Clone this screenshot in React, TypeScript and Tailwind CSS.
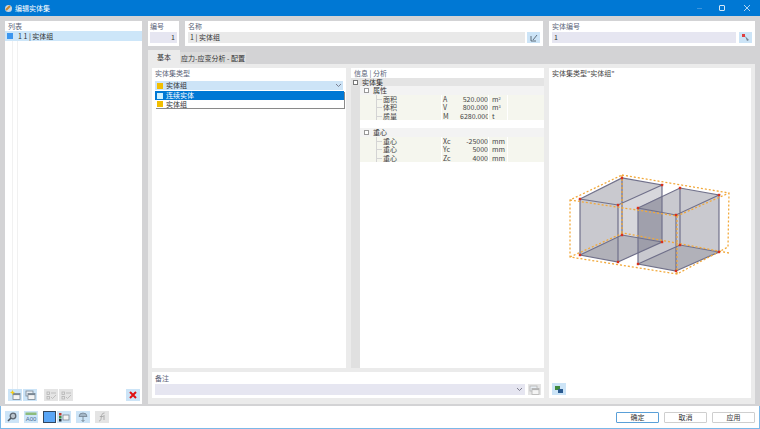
import React from 'react';

const font = { fontFamily: '"Noto Sans CJK SC", "Liberation Sans", sans-serif' };

const IconBtn = ({ children, off }: { children?: React.ReactNode; off?: boolean }) => (
  <div className={`w-[14px] h-[12px] flex items-center justify-center shrink-0 ${off ? 'bg-[#e4e4e4]' : 'bg-[#cce4f7]'}`}>{children}</div>
);

const Win = ({ c = '#7a8794', star, dbl }: { c?: string; star?: boolean; dbl?: boolean }) => (
  <svg width="11" height="10" viewBox="0 0 11 10">
    {dbl && <rect x="1" y="1" width="7" height="5" fill="#e8eef4" stroke={c} strokeWidth="0.8" />}
    <rect x="3" y="3.5" width="7" height="6" fill="#f4f4f4" stroke={c} strokeWidth="0.8" />
    <rect x="3" y="3.5" width="7" height="1.6" fill={c} />
    {star && <path d="M2.5 0L3.3 1.7L5 2.5L3.3 3.3L2.5 5L1.7 3.3L0 2.5L1.7 1.7Z" fill="#f5cf1c" />}
  </svg>
);

const CheckList = () => (
  <svg width="11" height="9" viewBox="0 0 11 9" fill="none" stroke="#b4b4b4" strokeWidth="0.8">
    <rect x="1" y="1" width="2.500" height="2.500" />
    <rect x="1" y="5.500" width="2.500" height="2.500" />
    <path d="M5 6L6.500 7.500L10 4M5 2H10" />
  </svg>
);

const Row = ({ label, sym, val, unit, sup }: { label: string; sym: string; val: string; unit: string; sup?: string }) => (
  <div className="flex h-[8.5px] bg-[#f5f6ee] text-[#444] leading-[8.5px]">
    <div className="w-[81px] relative pl-[23px] shrink-0">
      <span className="absolute left-[16px] top-0 bottom-0 border-l border-[#d4d4d4]" />
      <span className="absolute left-[16px] top-1/2 w-[6px] border-t border-[#d4d4d4]" />
      {label}
    </div>
    <div className="w-[19px] border-l border-white pl-[1px] shrink-0">{sym}</div>
    <div className="w-[28px] text-right shrink-0">{val}</div>
    <div className="w-[19px] pl-[3px] border-l border-white shrink-0">
      {unit}
      {sup && <sup className="text-[4px] leading-none">{sup}</sup>}
    </div>
    <div className="flex-1 border-l border-white" />
  </div>
);

const GroupRow = ({ label }: { label: string }) => (
  <div className="h-[8.5px] bg-[#f3f3f3] flex items-center leading-[8.5px] pl-[4px]">
    <span className="w-[5px] h-[5px] border border-[#999] mr-[4px] bg-white shrink-0" />
    {label}
  </div>
);

const Solid = () => {
  const edge = '#70708a';
  const fill = '#9c9ca8';
  const P = (d: string, o = 0.55) => <path d={d} fill={fill} fillOpacity={o} stroke="none" />;
  const L = (d: string) => <path d={d} fill="none" stroke={edge} strokeWidth="1.2" />;
  const reds: [number, number][] = [
    [580, 199], [618, 205], [622, 178], [662, 185], [580, 255], [618, 262], [622, 235], [662, 242],
    [638, 208], [676, 215], [680, 188], [719, 195], [638, 264], [676, 271], [680, 245], [719, 252],
  ];
  return (
    <svg width="170" height="115" viewBox="565 165 170 115" className="block">
      {P('M580 199L622 178L662 185L618 205Z')}
      {P('M580 199L618 205V262L580 255Z')}
      {P('M618 205L662 185V242L618 262Z', 0.4)}
      {P('M580 255L622 235L662 242L618 262Z')}
      {P('M638 208L680 188L719 195L676 215Z')}
      {P('M638 208L676 215V271L638 264Z', 0.55)}
      {P('M638 208L662 196V242L638 253Z', 0.85)}
      {P('M676 215L719 195V252L676 271Z')}
      {P('M638 264L680 245L719 252L676 271Z')}
      {L('M580 199L622 178L662 185L618 205ZM580 199V255L618 262V205M618 262L662 242V185M580 255L622 235L662 242M622 178V235')}
      {L('M638 208L680 188L719 195L676 215ZM638 208V264L676 271V215M676 271L719 252V195M638 264L680 245L719 252M680 188V245')}
      <path
        d="M622 175L729 193L728 247L677 274L570 257V200ZM570 200L677 216L729 193M570 257L623 233L729 253M622 175V233M677 216V274"
        fill="none"
        stroke="#f2a93b"
        strokeWidth="1.3"
        strokeDasharray="2 2"
      />
      {reds.map(([x, y]) => (
        <rect key={`${x}-${y}`} x={x - 1.2} y={y - 1.2} width="2.400" height="2.400" fill="#d8301c" />
      ))}
    </svg>
  );
};

const Caption = ({ children }: { children: React.ReactNode }) => (
  <div className="text-[7px] leading-[10px] text-[#5a6478]">{children}</div>
);

const Chevron = () => (
  <svg width="7" height="5" viewBox="0 0 7 5">
    <path d="M1 1L3.500 3.500L6 1" stroke="#667" strokeWidth="0.8" fill="none" />
  </svg>
);

export default function App() {
  return (
    <div className="w-[760px] h-[429px] flex flex-col overflow-hidden bg-[#d3d3d5] text-[7px] text-[#333]" style={font}>
      {/* title bar */}
      <div className="h-[16px] bg-[#0078d4] flex items-center pl-[4px] text-white shrink-0">
        <svg width="9" height="9" viewBox="0 0 9 9">
          <circle cx="4.500" cy="4.500" r="3.500" fill="#c9d4de" />
          <path d="M2 6L6 2" stroke="#c8862c" strokeWidth="2" />
        </svg>
        <span className="ml-[2px]">编辑实体集</span>
        <div className="ml-auto flex items-center">
          <div className="w-[5px] h-[1px] bg-[#3d95dd] mr-[17px]" />
          <div className="w-[6px] h-[6px] border border-[#d5e8f7] rounded-[1px] mr-[19px]" />
          <svg width="6" height="6" viewBox="0 0 6 6" className="mr-[10px]">
            <path d="M0 0L6 6M6 0L0 6" stroke="#e0eefa" strokeWidth="0.8" />
          </svg>
        </div>
      </div>

      {/* body */}
      <div className="flex-1 flex min-h-0 pl-[5px] pr-[5px] pt-[5px] pb-[2px] gap-[6px]">
        {/* list */}
        <div className="w-[137px] bg-white flex flex-col">
          <div className="pl-[3px] h-[10px] leading-[10px] text-[#5a6478]">列表</div>
          <div className="h-[10px] bg-[#cde6f9] flex items-center pl-[2px]">
            <div className="w-[6px] h-[6px] bg-[#3c96ef]" />
            <span className="ml-[5px]">1 1 | 实体组</span>
          </div>
          <div className="flex-1 flex pl-[7px]">
            <div className="w-[6px] border-l border-r border-[#f1f1f1]" />
          </div>
          <div className="flex items-center h-[12px] mb-[3px] pl-[3px] pr-[2px] gap-[1px]">
            <IconBtn><Win star /></IconBtn>
            <IconBtn><Win dbl /></IconBtn>
            <div className="w-[5px]" />
            <IconBtn off><CheckList /></IconBtn>
            <IconBtn off><CheckList /></IconBtn>
            <div className="ml-auto">
              <IconBtn>
                <svg width="8" height="8" viewBox="0 0 8 8">
                  <path d="M1 1L7 7M7 1L1 7" stroke="#e01010" strokeWidth="2" />
                </svg>
              </IconBtn>
            </div>
          </div>
        </div>

        {/* right */}
        <div className="flex-1 flex flex-col min-w-0 gap-[4px]">
          <div className="flex h-[25px] gap-[6px]">
            <div className="w-[31px] bg-white px-[2px]">
              <Caption>编号</Caption>
              <div className="h-[11px] bg-[#e6e6f1] text-right pr-[2px] leading-[11px] mt-[1px]">1</div>
            </div>
            <div className="flex-1 bg-white px-[3px]">
              <Caption>名称</Caption>
              <div className="flex gap-[2px] mt-[1px]">
                <div className="flex-1 h-[11px] bg-[#e9e9e9] pl-[2px] leading-[11px]">1 | 实体组</div>
                <div className="w-[13px] h-[11px] bg-[#cce4f7] flex items-center justify-center">
                  <svg width="8" height="8" viewBox="0 0 8 8">
                    <path d="M3 6L7 1M1 2V7H6" stroke="#44505e" strokeWidth="0.8" fill="none" />
                  </svg>
                </div>
              </div>
            </div>
            <div className="w-[206px] bg-white px-[3px]">
              <Caption>实体编号</Caption>
              <div className="flex gap-[3px] mt-[1px]">
                <div className="flex-1 h-[11px] bg-[#e6e6f1] pl-[2px] leading-[11px]">1</div>
                <div className="w-[13px] h-[11px] bg-[#cce4f7] flex items-center justify-center">
                  <svg width="9" height="9" viewBox="0 0 9 9">
                    <rect x="1" y="1" width="3" height="3" fill="#e04040" />
                    <path d="M4 3L8 7L6 8Z" fill="#7b8794" />
                  </svg>
                </div>
              </div>
            </div>
          </div>

          {/* tabs */}
          <div className="flex-1 flex flex-col min-h-0">
            <div className="flex h-[14px] items-end shrink-0">
              <div className="h-[14px] w-[32px] bg-[#ebebeb] flex items-center justify-center">基本</div>
              <div className="h-[12px] w-[66px] bg-[#dcdcdc] flex items-center justify-center">应力-应变分析 - 配置</div>
            </div>
            <div className="flex-1 bg-[#ebebeb] pt-[4px] pl-[4px] pr-[4px] pb-[6px] flex gap-[5px] min-h-0">
              <div className="flex-1 flex flex-col gap-[4px] min-w-0">
                <div className="flex-1 flex gap-[5px] min-h-0">
                  <div className="w-[194px] bg-white px-[3px] relative shrink-0">
                    <Caption>实体集类型</Caption>
                    <div className="h-[9px] mt-[3px] bg-[#cde4f7] flex items-center pl-[2px]">
                      <div className="w-[6px] h-[6px] bg-[#f2be00]" />
                      <span className="ml-[3px]">实体组</span>
                      <span className="ml-auto mr-[1px] flex"><Chevron /></span>
                    </div>
                    <div className="absolute left-[3px] top-[23px] w-[189px] h-[17px] bg-white shadow-[1px_1px_0_#8a8a8a]">
                      <div className="h-[9px] bg-[#0078d4] text-white flex items-center pl-[2px]">
                        <div className="w-[6px] h-[6px] bg-[#cdf0ff]" />
                        <span className="ml-[3px]">连续实体</span>
                      </div>
                      <div className="h-[8px] flex items-center pl-[2px]">
                        <div className="w-[6px] h-[6px] bg-[#f2be00]" />
                        <span className="ml-[3px]">实体组</span>
                      </div>
                    </div>
                  </div>
                  <div className="flex-1 bg-white flex flex-col min-w-0">
                    <div className="pl-[3px]"><Caption>信息 | 分析</Caption></div>
                    <div className="h-[8px] bg-[#e4e4e4] flex items-center leading-[8px] pl-[2px] shrink-0">
                      <span className="w-[5px] h-[5px] border border-[#777] mr-[4px] bg-white shrink-0" />
                      实体集
                    </div>
                    <div className="flex-1 flex min-h-0">
                      <div className="w-[9px] bg-[#e0e0e0] shrink-0" />
                      <div className="flex-1 min-w-0">
                        <GroupRow label="属性" />
                        <Row label="面积" sym="A" val="520.000" unit="m" sup="2" />
                        <Row label="体积" sym="V" val="800.000" unit="m" sup="3" />
                        <Row label="质量" sym="M" val="6280.000" unit="t" />
                        <div className="h-[8px]" />
                        <GroupRow label="重心" />
                        <Row label="重心" sym="Xc" val="-25000" unit="mm" />
                        <Row label="重心" sym="Yc" val="5000" unit="mm" />
                        <Row label="重心" sym="Zc" val="4000" unit="mm" />
                      </div>
                    </div>
                  </div>
                </div>
                <div className="h-[26px] bg-white px-[3px] shrink-0 pt-[1px]">
                  <Caption>备注</Caption>
                  <div className="flex gap-[3px] mt-[1px]">
                    <div className="flex-1 h-[11px] bg-[#e6e6f1] flex items-center justify-end pr-[2px]">
                      <Chevron />
                    </div>
                    <div className="w-[13px] h-[11px] bg-[#e4e4e4] flex items-center justify-center">
                      <Win c="#b4b4b4" dbl />
                    </div>
                  </div>
                </div>
              </div>
              <div className="w-[202px] bg-white shrink-0 flex flex-col pl-[3px]">
                <div className="text-[#444] leading-[10px]">实体集类型"实体组"</div>
                <div className="flex-1 pt-[87px] ml-[13px]"><Solid /></div>
                <div className="mb-[3px]">
                  <IconBtn>
                    <svg width="10" height="9" viewBox="0 0 10 9">
                      <rect x="1" y="1" width="5" height="4" fill="#3f8a3f" />
                      <rect x="4" y="4" width="5" height="4" fill="#2a5a90" />
                    </svg>
                  </IconBtn>
                </div>
              </div>
            </div>
          </div>
        </div>
      </div>

      {/* footer */}
      <div className="h-[23px] bg-white border-x border-b border-[#7cb8e8] flex items-center pl-[4px] pr-[4px] shrink-0">
        <div className="flex items-center gap-[5px]">
          <IconBtn>
            <svg width="10" height="10" viewBox="0 0 10 10" fill="none">
              <circle cx="6" cy="4" r="2.800" stroke="#5c6570" strokeWidth="1.3" fill="#b9c3cc" />
              <path d="M4 6L1 9" stroke="#4c545c" strokeWidth="1.6" />
            </svg>
          </IconBtn>
          <IconBtn>
            <svg width="12" height="10" viewBox="0 0 12 10">
              <rect x="0.500" y="0.500" width="11" height="2.500" fill="#8cbc7c" />
              <text x="6" y="8.800" textAnchor="middle" fontSize="6" fill="#4a6d96" fontFamily="Liberation Sans">A00</text>
            </svg>
          </IconBtn>
          <div className="flex gap-[1px]">
            <div className="w-[13px] h-[12px] bg-[#5aa6f6] border border-[#33475e]" />
            <IconBtn>
              <svg width="12" height="10" viewBox="0 0 12 10">
                <rect x="1" y="1" width="2.500" height="2.500" fill="#c0392b" />
                <rect x="1" y="4" width="2.500" height="2.500" fill="#3f8a3f" />
                <rect x="1" y="7" width="2.500" height="2.500" fill="#22303e" />
                <rect x="5" y="3" width="6" height="5" fill="#f4f4f4" stroke="#7a8794" strokeWidth="0.8" />
              </svg>
            </IconBtn>
          </div>
          <IconBtn>
            <svg width="10" height="10" viewBox="0 0 10 10" fill="none">
              <path d="M1 4.500A4 3.500 0 0 1 9 4.500Z" fill="#a4b7c7" stroke="#6a7886" strokeWidth="0.7" />
              <path d="M5 4.500V9.500M3.500 8L5 9.500L6.500 8" stroke="#6a7886" strokeWidth="0.8" />
            </svg>
          </IconBtn>
          <IconBtn off>
            <svg width="10" height="10" viewBox="0 0 10 10" fill="none" stroke="#a8a8a8" strokeWidth="0.9">
              <path d="M2 9C4 9 4 7 4.300 5S5 1 7.500 1M2.800 4.500H6.500M7 3V8" />
            </svg>
          </IconBtn>
        </div>
        <div className="ml-auto flex gap-[5px]">
          <div className="w-[43px] h-[11px] border border-[#5aa0d8] rounded-[1px] flex items-center justify-center">确定</div>
          <div className="w-[43px] h-[11px] border border-[#cfcfcf] rounded-[1px] flex items-center justify-center">取消</div>
          <div className="w-[43px] h-[11px] border border-[#cfcfcf] rounded-[1px] flex items-center justify-center">应用</div>
        </div>
      </div>
    </div>
  );
}
